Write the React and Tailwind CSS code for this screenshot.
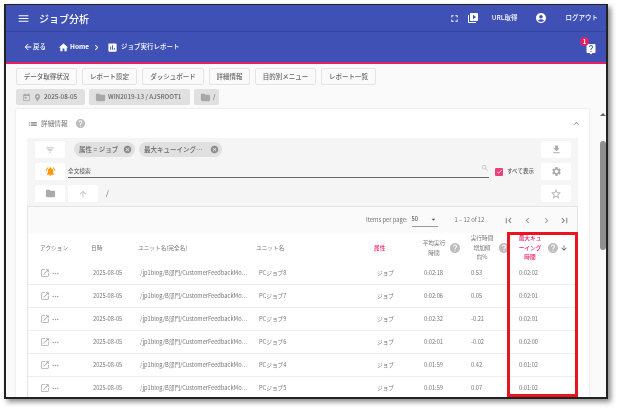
import React from 'react';
import {
  MdMenu, MdArrowBack, MdHome, MdChevronRight, MdAssessment, MdFullscreen, MdVideoLibrary, MdAccountCircle,
  MdLiveHelp, MdToday, MdPlace, MdFolder, MdList, MdHelp, MdExpandLess, MdFilterList, MdCancel,
  MdFileDownload, MdNotificationsActive, MdSearch, MdCheck, MdSettings, MdArrowUpward, MdStarBorder,
  MdFirstPage, MdChevronLeft, MdLastPage, MdArrowDropDown, MdArrowDownward, MdOpenInNew, MdMoreHoriz,
} from 'react-icons/md';

const font = { fontFamily: '"Noto Sans CJK JP", Roboto, sans-serif' };

const tabs = [
  ['データ取得状況', 'w-[61px]'],
  ['レポート設定', 'w-[55px]'],
  ['ダッシュボード', 'w-[62px]'],
  ['詳細情報', 'w-[41px]'],
  ['目的別メニュー', 'w-[61px]'],
  ['レポート一覧', 'w-[55px]'],
];

const rows = [
  ['PCジョブ8', '0:02:18', '0.53', '0:02:02'],
  ['PCジョブ7', '0:02:06', '0.05', '0:02:01'],
  ['PCジョブ9', '0:02:32', '-0.21', '0:02:01'],
  ['PCジョブ6', '0:02:01', '-0.02', '0:02:00'],
  ['PCジョブ4', '0:01:59', '0.42', '0:01:02'],
  ['PCジョブ5', '0:01:59', '0.07', '0:01:02'],
];

const cols = 'grid grid-cols-[63px_47px_118px_110px_50px_50px_48px_64px]';

const SquareButton = ({ children }) => (
  <div className="w-[30px] h-[17px] bg-white rounded-[2px] flex items-center justify-center shrink-0">{children}</div>
);

const FilterChip = ({ label, width }) => (
  <div className={`${width} h-[15px] bg-[#e0e0e0] rounded-full flex items-center justify-between pl-[5px] pr-[3px] text-[6.5px] font-medium text-[#666] whitespace-nowrap`}>
    <span>{label}</span>
    <MdCancel size={9} className="text-[#8a8a8a]" />
  </div>
);

const App = () => {
  return (
    <div className="w-[619px] h-[410px] bg-white pl-[4px] pt-[4px] overflow-hidden blur-[0.4px]" style={font}>
      <div className="w-[604px] h-[395px] border-x-2 border-b-2 border-t border-[#222] shadow-[3px_3px_5px_rgba(0,0,0,0.45)] bg-[#fafafa] overflow-hidden flex flex-col">
        {/* Top bar */}
        <div className="h-[27px] shrink-0 bg-[#3f51b5] border-b border-[#3647a0] flex items-center text-white whitespace-nowrap">
          <MdMenu size={13} className="ml-[11px]" />
          <span className="ml-[9px] text-[10px] font-medium">ジョブ分析</span>
          <div className="ml-auto mr-[8px] flex items-center">
            <MdFullscreen size={11} />
            <MdVideoLibrary size={12} className="ml-[7px]" />
            <span className="ml-[13px] text-[6.5px] font-medium">URL取得</span>
            <MdAccountCircle size={12} className="ml-[17px]" />
            <span className="ml-[19px] text-[6.5px] font-medium">ログアウト</span>
          </div>
        </div>
        {/* Breadcrumb bar */}
        <div className="h-[32px] shrink-0 bg-[#3f51b5] border-b-2 border-[#e91e63] flex items-center text-white relative whitespace-nowrap">
          <MdArrowBack size={10} className="ml-[17px]" />
          <span className="text-[6.5px] font-medium">戻る</span>
          <MdHome size={11} className="ml-[12px]" />
          <span className="ml-[1px] text-[6.5px] font-bold">Home</span>
          <MdChevronRight size={11} className="ml-[2px]" />
          <MdAssessment size={11} className="ml-[5px]" />
          <span className="ml-[3px] text-[6.5px] font-medium">ジョブ実行レポート</span>
          <MdLiveHelp size={12} className="ml-auto mr-[9px] mt-[3px]" />
          <span className="absolute right-[17px] top-[5px] w-[9px] h-[9px] rounded-full bg-[#e91e63] text-[6px] font-bold flex items-center justify-center">1</span>
        </div>
        {/* Report tabs */}
        <div className="flex gap-[5px] pl-[10px] pt-[4px] shrink-0">
          {tabs.map(([label, width]) => (
            <div key={label} className={`${width} h-[17px] bg-[#fafafa] border border-[#e4e4e4] rounded-[2px] flex items-center justify-center text-[6.5px] font-medium text-[#666]`}>
              {label}
            </div>
          ))}
        </div>
        {/* Location chips */}
        <div className="flex gap-[4px] pl-[10px] mt-[4px] shrink-0 text-[6.3px] font-medium text-[#666] whitespace-nowrap">
          <div className="w-[69px] h-[16px] bg-[#e0e0e0] rounded-[2px] flex items-center pl-[6px] gap-[2px]">
            <MdToday size={9} className="text-[#a8a8a8]" />
            <MdPlace size={9} className="text-[#a8a8a8]" />
            <span>2025-08-05</span>
          </div>
          <div className="w-[101px] h-[16px] bg-[#e0e0e0] rounded-[2px] flex items-center pl-[6px] gap-[2px]">
            <MdFolder size={11} className="text-[#a8a8a8]" />
            <span>WIN2019-13 / AJSROOT1</span>
          </div>
          <div className="w-[25px] h-[16px] bg-[#e0e0e0] rounded-[2px] flex items-center pl-[6px] gap-[2px]">
            <MdFolder size={11} className="text-[#a8a8a8]" />
            <span>/</span>
          </div>
        </div>

        <div className="flex-1 min-h-0 flex mt-[4px]">
          {/* Detail card */}
          <div className="w-[573px] ml-[10px] bg-white shadow-[0_0_2px_rgba(0,0,0,0.12)] px-[11px] overflow-hidden">
            <div className="h-[29px] flex items-center text-[#777]">
              <MdList size={10} className="ml-[1px]" />
              <span className="ml-[3px] text-[6.7px]">詳細情報</span>
              <MdHelp size={11} className="ml-[7px] text-[#bdbdbd]" />
              <MdExpandLess size={11} className="ml-auto mr-[-4px] text-[#999]" />
            </div>
            {/* Filter panel */}
            <div className="h-[68px] bg-[#f5f5f5] pl-[8px] pr-[7px] pt-[3px] flex flex-col gap-[5px]">
              <div className="flex items-center">
                <SquareButton><MdFilterList size={10} className="text-[#aaa]" /></SquareButton>
                <div className="ml-[9px] flex gap-[4px]">
                  <FilterChip label="属性 = ジョブ" width="w-[61px]" />
                  <FilterChip label="最大キューイング…" width="w-[83px]" />
                </div>
                <div className="ml-auto"><SquareButton><MdFileDownload size={11} className="text-[#aaa]" /></SquareButton></div>
              </div>
              <div className="flex items-center">
                <SquareButton><MdNotificationsActive size={11} className="text-[#ff9800]" /></SquareButton>
                <div className="ml-[3px] w-[421px] h-[13px] border-b border-[#666] flex items-center justify-between text-[5.7px] text-[#555] leading-none relative">
                  <span>全文検索</span>
                  <MdSearch size={8} className="text-[#bbb] absolute right-0 -top-[1px]" />
                </div>
                <div className="ml-[6px] w-[8px] h-[8px] bg-[#ec407a] rounded-[1px] flex items-center justify-center">
                  <MdCheck size={7} className="text-white" />
                </div>
                <span className="ml-[4px] text-[5.5px] font-medium text-[#555] whitespace-nowrap">すべて表示</span>
                <div className="ml-auto"><SquareButton><MdSettings size={11} className="text-[#aaa]" /></SquareButton></div>
              </div>
              <div className="flex items-center">
                <SquareButton><MdFolder size={11} className="text-[#aaa]" /></SquareButton>
                <div className="ml-[3px]"><SquareButton><MdArrowUpward size={10} className="text-[#bbb]" /></SquareButton></div>
                <span className="ml-[8px] text-[7px] text-[#555]">/</span>
                <div className="ml-auto"><SquareButton><MdStarBorder size={12} className="text-[#aaa]" /></SquareButton></div>
              </div>
            </div>

            {/* Table */}
            <div className="border border-[#e4e4e4] bg-white relative">
              <div className="h-[26px] bg-[#fafafa] flex items-center text-[5.8px] text-[#777] whitespace-nowrap">
                <span className="ml-[338px]">Items per page:</span>
                <div className="ml-[4px] w-[26px] h-[13px] border-b border-[#999] flex items-center justify-between text-[#444]">
                  <span>50</span>
                  <MdArrowDropDown size={9} className="text-[#555]" />
                </div>
                <span className="ml-[17px]">1 – 12 of 12</span>
                <MdFirstPage size={11} className="ml-[19px] text-[#777]" />
                <MdChevronLeft size={11} className="ml-[8px] text-[#999]" />
                <MdChevronRight size={11} className="ml-[8px] text-[#999]" />
                <MdLastPage size={11} className="ml-[7px] text-[#777]" />
              </div>
              <div className={`${cols} h-[29px] items-center text-[5.7px] leading-[9.5px] text-[#777]`}>
                <span className="pl-[12px]">アクション</span>
                <span>日時</span>
                <span>ユニット名(完全名)</span>
                <span>ユニット名</span>
                <span className="pl-[8px] text-[#e91e63] font-medium">属性</span>
                <div className="pl-[6px] flex items-center">
                  <span className="w-[24px] text-center">平均実行時間</span>
                  <MdHelp size={12} className="ml-[3px] text-[#bdbdbd]" />
                </div>
                <div className="pl-[4px] flex items-center">
                  <span className="w-[24px] text-center">実行時間増加傾向%</span>
                  <MdHelp size={12} className="ml-[4px] text-[#bdbdbd]" />
                </div>
                <div className="pl-[4px] flex items-center">
                  <span className="w-[24px] text-center text-[#e91e63] font-medium">最大キューイング時間</span>
                  <MdHelp size={12} className="ml-[5px] text-[#bdbdbd]" />
                  <MdArrowDownward size={8} className="ml-[1px] text-[#555]" />
                </div>
              </div>
              {rows.map(([unit, avg, trend, queue]) => (
                <div key={unit} className={`${cols} h-[23px] items-center border-b border-[#eeeeee] text-[5.7px] text-[#777]`}>
                  <div className="pl-[12px] flex items-center gap-[1px]">
                    <MdOpenInNew size={10} className="text-[#aaa]" />
                    <MdMoreHoriz size={9} className="text-[#999]" />
                  </div>
                  <span className="pl-[2px]">2025-08-05</span>
                  <span className="pl-[2px] whitespace-nowrap">/jp1blog/B部門/CustomerFeedbackMo…</span>
                  <span className="pl-[3px]">{unit}</span>
                  <span className="pl-[11px]">ジョブ</span>
                  <span className="pl-[8px]">{avg}</span>
                  <span className="pl-[5px]">{trend}</span>
                  <span className="pl-[5px]">{queue}</span>
                </div>
              ))}
              {/* Callout around the sorted column */}
              <div className="absolute left-[479px] top-[25px] w-[71px] h-[165px] border-[3px] border-[#e8141f]" />
            </div>
          </div>
          {/* Scrollbar */}
          <div className="ml-[11px] w-[6px] flex flex-col items-center pt-[4px]">
            <div className="w-0 h-0 border-x-[3px] border-x-transparent border-b-[3px] border-b-[#666]" />
            <div className="mt-[25px] w-[6px] h-[109px] bg-[#8f8f8f] rounded-full" />
          </div>
        </div>
      </div>
    </div>
  );
};

export default App;
